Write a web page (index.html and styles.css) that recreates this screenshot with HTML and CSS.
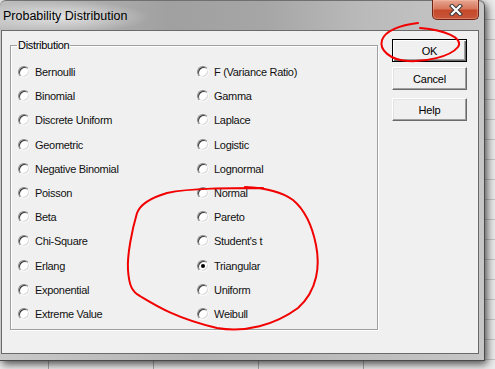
FILE: index.html
```html
<!DOCTYPE html>
<html>
<head>
<meta charset="utf-8">
<link rel="stylesheet" href="styles.css">
</head>
<body>
<div class="screen">
  <div class="window">
    <div class="titlebar">
      <span class="title">Probability Distribution</span>
      <button class="close" type="button" aria-label="Close">
        <svg width="14" height="12" viewBox="0 0 14 12">
          <path d="M3 2 L11 10 M11 2 L3 10" stroke="#3a3a3a" stroke-width="4.2" stroke-linecap="square" fill="none"/>
          <path d="M3 2 L11 10 M11 2 L3 10" stroke="#ffffff" stroke-width="2.2" stroke-linecap="square" fill="none"/>
        </svg>
      </button>
    </div>
    <div class="client">
      <fieldset class="group">
        <legend>Distribution</legend>
        <div class="options">
          <label class="opt"><span class="radio"></span>Bernoulli</label>
          <label class="opt"><span class="radio"></span>Binomial</label>
          <label class="opt"><span class="radio"></span>Discrete Uniform</label>
          <label class="opt"><span class="radio"></span>Geometric</label>
          <label class="opt"><span class="radio"></span>Negative Binomial</label>
          <label class="opt"><span class="radio"></span>Poisson</label>
          <label class="opt"><span class="radio"></span>Beta</label>
          <label class="opt"><span class="radio"></span>Chi-Square</label>
          <label class="opt"><span class="radio"></span>Erlang</label>
          <label class="opt"><span class="radio"></span>Exponential</label>
          <label class="opt"><span class="radio"></span>Extreme Value</label>
          <label class="opt"><span class="radio"></span>F (Variance Ratio)</label>
          <label class="opt"><span class="radio"></span>Gamma</label>
          <label class="opt"><span class="radio"></span>Laplace</label>
          <label class="opt"><span class="radio"></span>Logistic</label>
          <label class="opt"><span class="radio"></span>Lognormal</label>
          <label class="opt"><span class="radio"></span>Normal</label>
          <label class="opt"><span class="radio"></span>Pareto</label>
          <label class="opt"><span class="radio"></span>Student's t</label>
          <label class="opt"><span class="radio checked"></span>Triangular</label>
          <label class="opt"><span class="radio"></span>Uniform</label>
          <label class="opt"><span class="radio"></span>Weibull</label>
        </div>
      </fieldset>
      <div class="buttons">
        <button class="btn default" type="button">OK</button>
        <button class="btn" type="button">Cancel</button>
        <button class="btn help" type="button">Help</button>
      </div>
    </div>
  </div>
  <svg class="annot" width="495" height="369" viewBox="0 0 495 369">
    <path d="M418,23 C400,25 385,31 382,40 C379,50 390,60 408,61 C425,62 450,57 458,47 C464,38 445,30 420,28"
          fill="none" stroke="#f20000" stroke-width="2" stroke-linecap="round"/>
    <path d="M263,188 C230,188 190,188 167,193 C150,198 140,205 137,213 C132,230 127,255 128,270 C129,285 132,292 140,296 C155,305 175,318 217,328 C245,333 275,325 298,308 C318,290 320,265 316,245 C312,225 305,210 293,200 C282,192 268,188 245,187"
          fill="none" stroke="#f20000" stroke-width="2" stroke-linecap="round"/>
  </svg>
</div>
</body>
</html>
```
FILE: styles.css
```css
* { box-sizing: border-box; }

html, body {
  margin: 0;
  padding: 0;
  background: #ececec;
}

.screen {
  position: relative;
  width: 495px;
  height: 369px;
  overflow: hidden;
  background-color: #ebebeb;
  background-image:
    repeating-linear-gradient(to bottom, transparent 0 19px, #c4c4c4 19px 20px),
    repeating-linear-gradient(to right, transparent 0 104px, #a8a8a8 104px 105px);
  background-position: 0 0, -56px 0;
}

.window {
  width: 485px;
  height: 361px;
  display: flex;
  flex-direction: column;
  border-radius: 6px 6px 0 0;
  border-right: 1px solid #4a4a4a;
  border-bottom: 1px solid #4a4a4a;
  background: linear-gradient(to right, #c9c9c9, #b3b3b3 40%, #bdbdbd 75%, #c6c6c6);
  box-shadow: 2px 3px 8px rgba(0, 0, 0, 0.7);
}

.titlebar {
  height: 30px;
  flex: none;
  display: flex;
  justify-content: space-between;
  align-items: flex-start;
  border-top: 1px solid #707070;
  border-radius: 6px 6px 0 0;
  background:
    radial-gradient(ellipse 90px 16px at 60px 16px, rgba(235, 235, 235, 0.85), rgba(235, 235, 235, 0) 100%),
    linear-gradient(to right, #bdbdbd 0, #a0a0a0 35%, #a6a6a6 55%, #bababa 75%, #c7c7c7 100%);
}

.title {
  font-family: "Liberation Sans", Arial, sans-serif;
  font-size: 12.5px;
  line-height: 14px;
  color: #000;
  padding: 8px 0 0 3px;
}

.close {
  width: 47px;
  height: 20px;
  margin: -1px 5px 0 0;
  padding: 0;
  display: flex;
  align-items: center;
  justify-content: center;
  border: 1px solid #6e2314;
  border-top: none;
  border-radius: 0 0 5px 5px;
  background: linear-gradient(to bottom, #e7a793 0, #d7775c 45%, #c54a2a 55%, #c8563a 100%);
  box-shadow: inset 0 0 0 1px rgba(255, 200, 180, 0.35);
}

.client {
  flex: 1;
  margin: 0 5px 6px 1px;
  border: 1px solid #6a6a6a;
  background: #f0f0f0;
  display: flex;
  align-items: flex-start;
  padding: 8px 0 0 8px;
  gap: 14px;
}

.group {
  width: 368px;
  height: 291px;
  margin: 0;
  padding: 0 0 0 7px;
  border: 1px solid #a0a0a0;
  box-shadow: 1px 1px 0 #ffffff, inset 1px 1px 0 #ffffff;
}

.group legend {
  margin-left: -1px;
  padding: 0 1px;
  font-family: "Liberation Sans", Arial, sans-serif;
  font-size: 11px;
  letter-spacing: -0.3px;
  line-height: 13px;
  color: #000;
}

.options {
  margin-top: 8px;
  display: grid;
  grid-template-columns: 179px 1fr;
  grid-template-rows: repeat(11, 24.2px);
  grid-auto-flow: column;
}

.opt {
  display: flex;
  align-items: center;
  gap: 5px;
  font-family: "Liberation Sans", Arial, sans-serif;
  font-size: 11px;
  letter-spacing: -0.3px;
  color: #111;
  white-space: nowrap;
}

.radio {
  position: relative;
  flex: none;
  width: 12px;
  height: 12px;
  border-radius: 50%;
  border: 1px solid;
  border-color: #8a8a8a #f8f8f8 #f8f8f8 #8a8a8a;
  background: #fff;
  box-shadow: inset 1px 1px 0 #3c3c3c, inset -1px -1px 0 #d8d8d8;
}

.radio.checked::after {
  content: "";
  position: absolute;
  left: 3px;
  top: 3px;
  width: 4px;
  height: 4px;
  border-radius: 50%;
  background: #000;
}

.buttons {
  display: flex;
  flex-direction: column;
  gap: 5px;
}

.btn {
  width: 75px;
  height: 23px;
  margin: 0;
  padding: 0;
  font-family: "Liberation Sans", Arial, sans-serif;
  font-size: 11px;
  letter-spacing: -0.2px;
  color: #000;
  background: #f0f0f0;
  border: 1px solid;
  border-color: #ffffff #6a6a6a #6a6a6a #ffffff;
  box-shadow: inset -1px -1px 0 #a0a0a0, inset 1px 1px 0 #e3e3e3;
}

.btn.default {
  border-color: #000;
  box-shadow: inset 1px 1px 0 #ffffff, inset -1px -1px 0 #6a6a6a, inset -2px -2px 0 #a0a0a0;
}

.btn.help {
  margin-top: 3px;
}

.annot {
  position: absolute;
  left: 0;
  top: 0;
  pointer-events: none;
}
```
